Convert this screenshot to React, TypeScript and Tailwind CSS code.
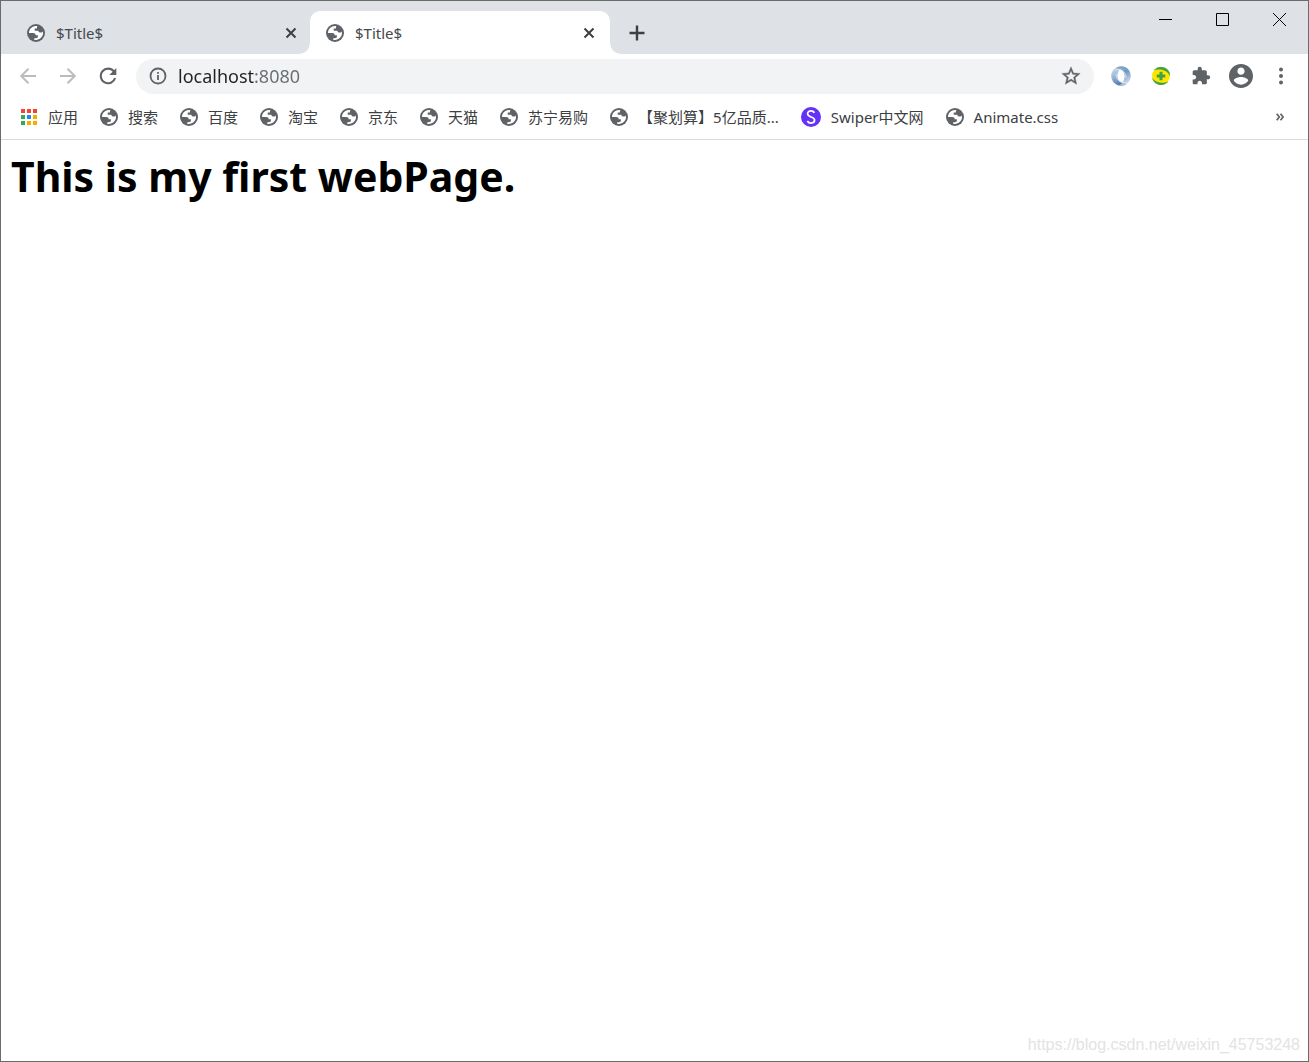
import React, { useState } from "react";

function GlobeIcon() {
  return (
    <svg viewBox="0 0 18 18" className="size-[18px] shrink-0" aria-hidden="true">
      <circle cx="9" cy="9" r="9" fill="#5f6368" />
      <path
        fill="#fff"
        d="M10.3 2.1C5.9 1.400 2 4.700 2 9h4.100c1.700 0 2.600.9 2.600 2.300h2.200v1.500c0 .9-.8 1.400-2.100 1.400H7.200v1.500c4.500 1.100 8.800-2.200 8.800-6.600 0-.6-.1-1.200-.2-1.700-.5.8-1.200 1.200-2.100 1.200-1.500 0-2.100-.9-2.500-1.900H7.700V4.600h2.200c0-1.100.2-1.900.4-2.500z"
      />
    </svg>
  );
}

function AppsIcon() {
  const colors = ["#f44336", "#f44336", "#f44336", "#34a853", "#1e88e5", "#fbab00", "#34a853", "#fbab00", "#fbab00"];
  return (
    <svg viewBox="0 0 18 18" className="size-[18px] shrink-0" aria-hidden="true">
      {colors.map((c, i) => (
        <rect key={i} x={1 + (i % 3) * 6} y={Math.floor(i / 3) * 6 + 1} width="4" height="4" fill={c} />
      ))}
    </svg>
  );
}

function SwiperIcon() {
  return (
    <svg viewBox="0 0 20 20" className="size-5 shrink-0" aria-hidden="true">
      <circle cx="10" cy="10" r="10" fill="#6332f6" />
      <path d="M13.500 5.800C12.600 4.500 11.400 3.900 10 3.900c-2 0-3.400 1.200-3.400 2.900 0 3.900 7 2.400 7 6.300 0 1.800-1.500 3-3.500 3-1.600 0-3-.7-3.800-2.100" fill="none" stroke="#fff" strokeWidth="1.700" />
    </svg>
  );
}

function SwirlIcon() {
  return (
    <svg viewBox="0 0 20 20" className="size-5" aria-hidden="true">
      <defs>
        <linearGradient id="swirlLeft" x1="0" y1="0" x2="0.4" y2="1">
          <stop offset="0" stopColor="#dbe7f2" />
          <stop offset="0.5" stopColor="#9dbad9" />
          <stop offset="1" stopColor="#4f7bb0" />
        </linearGradient>
        <linearGradient id="swirlRight" x1="0" y1="0" x2="0.5" y2="1">
          <stop offset="0" stopColor="#86a8cd" />
          <stop offset="0.5" stopColor="#5a84b6" />
          <stop offset="1" stopColor="#c3d6e9" />
        </linearGradient>
      </defs>
      <path d="M13 .500C6.500-1 0 3.500.200 10c.1 5.500 4.600 9.800 10 9.700 2.500 0 4-.700 5.500-2-4.800.3-9.200-2.500-9.200-7.700C6.500 6 8.500 2.500 13 .500z" fill="url(#swirlLeft)" />
      <path d="M7.500 19.500c6.500 1.300 12.300-3.500 12.300-9.500C19.800 4.500 15.500.300 10.500.300 8 .300 6 1 4.500 2.300 9.300 2 13.500 4.800 13.500 10c0 4-1.500 7.500-6 9.500z" fill="url(#swirlRight)" opacity="0.85" />
      <ellipse cx="10" cy="10" rx="3.300" ry="4.600" fill="#fff" />
      <path d="M5 3.500c6-.5 10.500 3 9.800 8.500M15 16.500C9 17 4.500 13.500 5.200 8" fill="none" stroke="#dde8f3" strokeWidth="0.900" />
    </svg>
  );
}

function PlusBadgeIcon() {
  return (
    <svg viewBox="0 0 18 18" className="size-[18px]" aria-hidden="true">
      <circle cx="9" cy="9" r="9" fill="#ffe600" />
      <path d="M2.400 3A8.900 8.900 0 0 1 17.900 8.500C15.500 3.300 8.300.700 2.400 3zM15.600 15A8.900 8.900 0 0 1 .500 11.500c2.700 4 9.900 5.900 15.100 3.500z" fill="#43a047" stroke="#43a047" strokeWidth="0.500" />
      <path d="M7.500 4.700h3v2.800h2.800v3h-2.800v2.800h-3v-2.800H4.700v-3h2.800z" fill="#43a047" />
    </svg>
  );
}

function Tab({ active, onSelect }: { active: boolean; onSelect: () => void }) {
  return (
    <div
      className={
        active
          ? "relative flex h-[43px] w-[300px] items-center rounded-t-[10px] bg-white pr-3 pl-4"
          : "flex h-[43px] w-[299px] items-center pr-[10px] pl-4"
      }
    >
      {active && (
        <>
          <span className="absolute bottom-0 -left-[10px] size-[10px] bg-[radial-gradient(circle_at_0_0,#dee1e6_9px,#fff_10px)]" />
          <span className="absolute -right-[10px] bottom-0 size-[10px] bg-[radial-gradient(circle_at_100%_0,#dee1e6_9px,#fff_10px)]" />
        </>
      )}
      <button type="button" onClick={onSelect} className="flex flex-1 items-center gap-[11px] text-left text-[15px] leading-5 text-[#45494d]">
        <GlobeIcon />
        <span>$Title$</span>
      </button>
      <button type="button" aria-label="Close tab" className="flex size-[18px] items-center justify-center">
        <svg viewBox="0 0 12 12" className="size-3" aria-hidden="true">
          <path d="M1.500 1.500l9 9m0-9l-9 9" stroke="#3c4043" strokeWidth="2" />
        </svg>
      </button>
    </div>
  );
}

function Toolbar() {
  const [url, setUrl] = useState("localhost:8080");
  return (
    <div className="flex h-[45px] items-center bg-white pr-[15px] pl-[15px]">
      <div className="flex items-center gap-4 pr-4 pb-px">
        <button type="button" aria-label="Back" className="flex size-6 items-center justify-center">
          <svg viewBox="0 0 18 18" className="size-[18px]" fill="none" stroke="#babcbe" strokeWidth="2" aria-hidden="true">
            <path d="M17 9H2.500M9.500 1.700L2.200 9l7.300 7.300" />
          </svg>
        </button>
        <button type="button" aria-label="Forward" className="flex size-6 items-center justify-center">
          <svg viewBox="0 0 18 18" className="size-[18px]" fill="none" stroke="#babcbe" strokeWidth="2" aria-hidden="true">
            <path d="M1 9h14.500M8.500 1.700L15.800 9l-7.300 7.300" />
          </svg>
        </button>
        <button type="button" aria-label="Reload" className="flex size-6 items-center justify-center">
          <svg viewBox="0 0 18 18" className="size-[18px]" fill="none" aria-hidden="true">
            <path d="M14.800 4.400A7.300 7.300 0 1 0 16.100 11" stroke="#5f6368" strokeWidth="2.100" />
            <path d="M17.300 1v7h-7z" fill="#5f6368" />
          </svg>
        </button>
      </div>
      <div className="flex h-[35px] flex-1 items-center rounded-full bg-[#f1f3f4] pr-3 pb-px pl-[13px]">
        <svg viewBox="0 0 18 18" className="size-[18px] shrink-0" aria-hidden="true">
          <circle cx="9" cy="9" r="7.500" fill="none" stroke="#5f6368" strokeWidth="1.800" />
          <path d="M8.100 8h1.800v5H8.100zM8.100 5h1.800v1.800H8.100z" fill="#5f6368" />
        </svg>
        <input
          aria-label="Address"
          value={url}
          onChange={(e) => setUrl(e.target.value)}
          className="ml-[11px] min-w-0 flex-1 bg-[linear-gradient(90deg,#202124_76px,#6a6e73_76px)] bg-clip-text text-[18px] leading-6 text-transparent outline-none"
        />
        <button type="button" aria-label="Bookmark this page" className="flex size-[22px] items-center justify-center">
          <svg viewBox="0 0 24 24" className="size-[22px]" fill="#5f6368" stroke="#5f6368" strokeWidth="0.400" aria-hidden="true">
            <path d="M22 9.240l-7.190-.62L12 2 9.190 8.630 2 9.240l5.460 4.730L5.820 21 12 17.270 18.180 21l-1.630-7.030L22 9.240zM12 15.400l-3.760 2.270 1-4.280-3.320-2.880 4.380-.38L12 6.100l1.710 4.040 4.380.38-3.320 2.880 1 4.280L12 15.400z" />
          </svg>
        </button>
      </div>
      <div className="flex items-center gap-4 pb-px pl-[15px]">
        <button type="button" aria-label="Swirl extension" className="flex size-6 items-center justify-center"><SwirlIcon /></button>
        <button type="button" aria-label="Plus extension" className="flex size-6 items-center justify-center"><PlusBadgeIcon /></button>
        <button type="button" aria-label="Extensions" className="flex size-6 items-center justify-center">
          <svg viewBox="0 0 24 24" className="size-5" fill="#5f6368" aria-hidden="true">
            <path d="M20.500 11H19V7c0-1.100-.9-2-2-2h-4V3.500C13 2.120 11.880 1 10.500 1S8 2.120 8 3.500V5H4c-1.100 0-1.990.9-1.990 2v3.800H3.500c1.490 0 2.700 1.210 2.700 2.700s-1.210 2.700-2.700 2.700H2V20c0 1.100.9 2 2 2h3.800v-1.500c0-1.490 1.210-2.700 2.700-2.700 1.490 0 2.700 1.210 2.700 2.700V22H17c1.100 0 2-.9 2-2v-4h1.500c1.380 0 2.500-1.120 2.500-2.500S21.880 11 20.500 11z" />
          </svg>
        </button>
        <button type="button" aria-label="Profile" className="flex size-6 items-center justify-center">
          <svg viewBox="2 2 20 20" className="size-6" fill="#5f6368" aria-hidden="true">
            <path d="M12 2C6.480 2 2 6.480 2 12s4.480 10 10 10 10-4.480 10-10S17.520 2 12 2zm0 3c1.660 0 3 1.340 3 3s-1.340 3-3 3-3-1.340-3-3 1.340-3 3-3zm0 14.200c-2.500 0-4.710-1.280-6-3.220.03-1.990 4-3.080 6-3.080 1.990 0 5.970 1.090 6 3.080-1.290 1.940-3.500 3.220-6 3.220z" />
          </svg>
        </button>
        <button type="button" aria-label="Menu" className="flex size-6 items-center justify-center">
          <svg viewBox="0 0 18 18" className="size-[18px]" fill="#5f6368" aria-hidden="true">
            <circle cx="9" cy="2.500" r="2" />
            <circle cx="9" cy="9" r="2" />
            <circle cx="9" cy="15.500" r="2" />
          </svg>
        </button>
      </div>
    </div>
  );
}

const bookmarks = ["搜索", "百度", "淘宝", "京东", "天猫", "苏宁易购", "【聚划算】5亿品质..."];

function Bookmark({ icon, label }: { icon: React.ReactNode; label: string }) {
  return (
    <a href="#" className="flex shrink-0 items-center gap-[10px] whitespace-nowrap">
      {icon}
      <span>{label}</span>
    </a>
  );
}

export default function App() {
  const [current, setCurrent] = useState(1);
  return (
    <div className="flex min-h-screen flex-col border border-[#6b6b6d] bg-white font-['Noto_Sans','Noto_Sans_CJK_SC',sans-serif]">
      <header>
        <div className="flex h-[53px] items-end bg-[#dee1e6] pl-[10px]">
          <Tab active={current === 0} onSelect={() => setCurrent(0)} />
          <Tab active={current === 1} onSelect={() => setCurrent(1)} />
          <button type="button" aria-label="New tab" className="ml-[18px] flex h-[43px] w-[18px] items-center justify-center">
            <svg viewBox="0 0 16 16" className="size-4" aria-hidden="true">
              <path d="M8 .500v15M.500 8h15" stroke="#3c4043" strokeWidth="2.400" />
            </svg>
          </button>
          <div className="ml-auto flex self-start">
            <button type="button" aria-label="Minimize" className="flex h-[37px] w-[57px] items-center justify-center">
              <svg viewBox="0 0 13 13" className="size-[13px]" aria-hidden="true"><path d="M0 6.500h13" stroke="#000" /></svg>
            </button>
            <button type="button" aria-label="Maximize" className="flex h-[37px] w-[57px] items-center justify-center">
              <svg viewBox="0 0 13 13" className="size-[13px]" aria-hidden="true"><path d="M.500.500h12v12H.500z" fill="none" stroke="#000" /></svg>
            </button>
            <button type="button" aria-label="Close" className="flex h-[37px] w-[57px] items-center justify-center">
              <svg viewBox="0 0 13 13" className="size-[13px]" aria-hidden="true"><path d="M0 0l13 13M13 0L0 13" stroke="#000" /></svg>
            </button>
          </div>
        </div>
        <Toolbar />
        <nav aria-label="Bookmarks" className="flex h-[41px] items-center gap-[22px] overflow-hidden border-b border-[#d9dbdd] bg-white pb-1 pr-6 pl-[19px] text-[15px] leading-5 text-[#3c4043]">
          <Bookmark icon={<AppsIcon />} label="应用" />
          {bookmarks.map((b) => (
            <Bookmark key={b} icon={<GlobeIcon />} label={b} />
          ))}
          <Bookmark icon={<SwiperIcon />} label="Swiper中文网" />
          <Bookmark icon={<GlobeIcon />} label="Animate.css" />
          <button type="button" aria-label="More bookmarks" className="ml-auto">
            <svg viewBox="0 0 8 8" className="size-2" fill="none" stroke="#5f6368" strokeWidth="1.700" aria-hidden="true">
              <path d="M.700.700L3.300 4 .700 7.300M4.500.700L7.100 4 4.500 7.300" />
            </svg>
          </button>
        </nav>
      </header>
      <main className="flex flex-1 flex-col justify-between">
        <h1 className="px-[10px] pt-2 text-[41px] leading-[56px] font-bold text-black">This is my first webPage.</h1>
        <p className="self-end px-2 pb-1 font-['Liberation_Sans',sans-serif] text-[16px] leading-6 text-[#e3e3e3]">https://blog.csdn.net/weixin_45753248</p>
      </main>
    </div>
  );
}
